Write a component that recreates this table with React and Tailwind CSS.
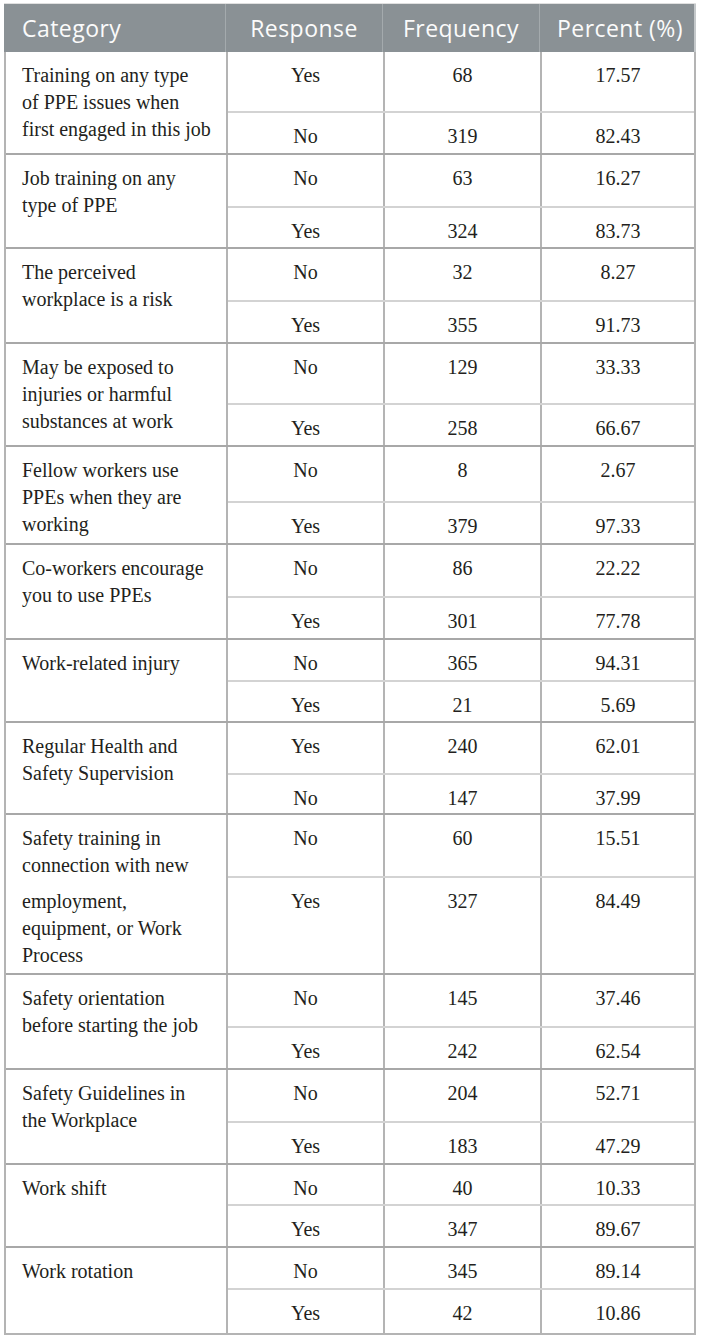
import React from 'react';

// each group: category lines, two sub rows [response, frequency, percent], sub row height classes
const groups = [
  {
    lines: ['Training on any type', 'of PPE issues when', 'first engaged in this job'],
    rows: [['Yes', '68', '17.57'], ['No', '319', '82.43']],
    h: ['h-[59px]', 'h-[42px]'],
  },
  {
    lines: ['Job training on any', 'type of PPE'],
    rows: [['No', '63', '16.27'], ['Yes', '324', '83.73']],
    h: ['h-[51px]', 'h-[41px]'],
  },
  {
    lines: ['The perceived', 'workplace is a risk'],
    rows: [['No', '32', '8.27'], ['Yes', '355', '91.73']],
    h: ['h-[51px]', 'h-[42px]'],
  },
  {
    lines: ['May be exposed to', 'injuries or harmful', 'substances at work'],
    rows: [['No', '129', '33.33'], ['Yes', '258', '66.67']],
    h: ['h-[59px]', 'h-[42px]'],
  },
  {
    lines: ['Fellow workers use', 'PPEs when they are', 'working'],
    rows: [['No', '8', '2.67'], ['Yes', '379', '97.33']],
    h: ['h-[54px]', 'h-[42px]'],
  },
  {
    lines: ['Co-workers encourage', 'you to use PPEs'],
    rows: [['No', '86', '22.22'], ['Yes', '301', '77.78']],
    h: ['h-[51px]', 'h-[42px]'],
  },
  {
    lines: ['Work-related injury'],
    rows: [['No', '365', '94.31'], ['Yes', '21', '5.69']],
    h: ['h-[40px]', 'h-[41px]'],
  },
  {
    lines: ['Regular Health and', 'Safety Supervision'],
    rows: [['Yes', '240', '62.01'], ['No', '147', '37.99']],
    h: ['h-[50px]', 'h-[40px]'],
  },
  {
    lines: ['Safety training in', 'connection with new'],
    split: ['employment,', 'equipment, or Work', 'Process'],
    rows: [['No', '60', '15.51'], ['Yes', '327', '84.49']],
    h: ['h-[61px]', 'h-[97px]'],
  },
  {
    lines: ['Safety orientation', 'before starting the job'],
    rows: [['No', '145', '37.46'], ['Yes', '242', '62.54']],
    h: ['h-[51px]', 'h-[42px]'],
  },
  {
    lines: ['Safety Guidelines in', 'the Workplace'],
    rows: [['No', '204', '52.71'], ['Yes', '183', '47.29']],
    h: ['h-[51px]', 'h-[42px]'],
  },
  {
    lines: ['Work shift'],
    rows: [['No', '40', '10.33'], ['Yes', '347', '89.67']],
    h: ['h-[39px]', 'h-[42px]'],
  },
  {
    lines: ['Work rotation'],
    rows: [['No', '345', '89.14'], ['Yes', '42', '10.86']],
    h: ['h-[40px]', 'h-[45px]'],
  },
];

const serif = "font-['Liberation_Serif','Times_New_Roman',serif]";

function Lines({ lines }) {
  return (
    <div className="pt-[10px] pl-[16px] text-[20px] leading-[27px] whitespace-nowrap">
      {lines.map((l, i) => (
        <div key={i}>{l}</div>
      ))}
    </div>
  );
}

function SubRow({ cells, h, inner }) {
  return (
    <div
      className={`grid grid-cols-[157px_157px_152px] ${h} ${
        inner ? 'border-t-2 border-[#d3d3d3]' : ''
      }`}
    >
      {cells.map((c, i) => (
        <div
          key={i}
          className={`pt-[10px] text-center text-[20px] leading-[27px] ${
            i < 2 ? 'border-r-2 border-[#b4b4b4]' : ''
          }`}
        >
          {c}
        </div>
      ))}
    </div>
  );
}

export default function App() {
  return (
    <div className="w-[702px] h-[1340px] bg-white pt-[3px] pl-[4px]">
      <div className="w-[692px] border-t border-[#e0e0e0]">
        <div className="grid grid-cols-[222px_157px_157px_156px] h-[48px] bg-[#8a9195] text-[#fbfbfb] font-['Open_Sans',sans-serif] text-[23px] tracking-[0.02em]">
          <div className="flex items-center pl-[18px] border-r border-[#a4aaad]">Category</div>
          <div className="flex items-center justify-center border-r border-[#a4aaad]">Response</div>
          <div className="flex items-center justify-center border-r border-[#a4aaad]">Frequency</div>
          <div className="flex items-center justify-center pl-[6px] border-r-2 border-[#c4c8ca] whitespace-nowrap">Percent (%)</div>
        </div>
        <div className={`border-x-2 border-b-2 border-[#b4b4b4] text-[#231f20] ${serif}`}>
          {groups.map((g, gi) => (
            <div key={gi} className="flex border-t-2 border-[#a8a8a8] first:border-t-0">
              <div className="w-[222px] border-r-2 border-[#b4b4b4]">
                {g.split ? (
                  <>
                    <div className={g.h[0]}>
                      <Lines lines={g.lines} />
                    </div>
                    <div className="pt-[2px]">
                      <Lines lines={g.split} />
                    </div>
                  </>
                ) : (
                  <Lines lines={g.lines} />
                )}
              </div>
              <div className="flex flex-col">
                <SubRow cells={g.rows[0]} h={g.h[0]} />
                <SubRow cells={g.rows[1]} h={g.h[1]} inner />
              </div>
            </div>
          ))}
        </div>
      </div>
    </div>
  );
}
